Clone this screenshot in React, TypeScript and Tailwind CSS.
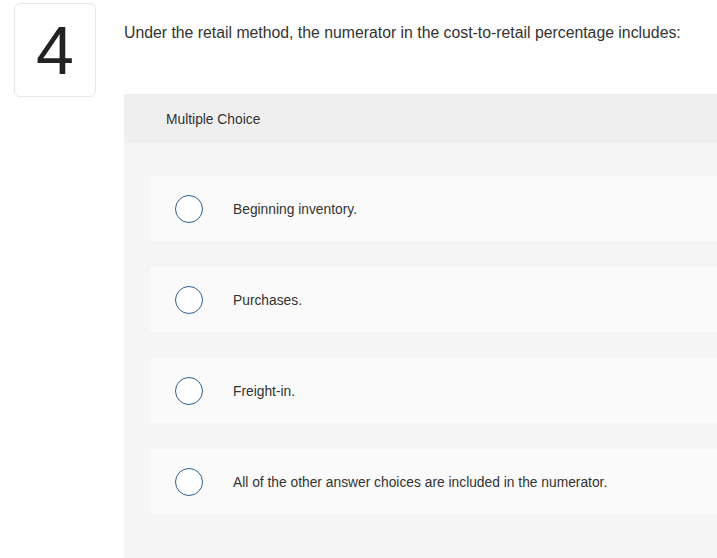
const options = [
  'Beginning inventory.',
  'Purchases.',
  'Freight-in.',
  'All of the other answer choices are included in the numerator.',
];

export default function App() {
  return (
    <div className="flex h-[558px] w-[717px] overflow-hidden bg-white text-[#333] [font-family:'Liberation_Sans',Arial,sans-serif]">
      <div className="w-[124px] shrink-0 pl-[14px] pt-[3px]">
        <div className="flex h-[94px] w-[82px] items-center justify-center rounded-[6px] border border-[#e8e8e8]">
          <span className="text-[68px] leading-none text-[#222]">4</span>
        </div>
      </div>
      <div className="flex min-w-0 flex-1 flex-col">
        <p className="mt-[24px] h-[70px] text-[15.8px] leading-[18px] whitespace-nowrap">
          Under the retail method, the numerator in the cost-to-retail percentage includes:
        </p>
        <div className="flex flex-1 flex-col bg-[#f5f5f5]">
          <div className="flex h-[49px] items-center bg-[#efefef] pl-[42px] pt-[3px] text-[13.8px]">Multiple Choice</div>
          <div className="flex flex-col gap-[26px] pl-[26px] pt-[33px]">
            {options.map(o => (
              <div key={o} className="flex h-[65px] items-center rounded-l-[4px] bg-[#fafafa] pl-[25px]">
                <span className="h-[28px] w-[28px] shrink-0 rounded-full border-[1.5px] border-[#2f5f8e] bg-white" />
                <span className="ml-[30px] mt-[3px] text-[13.8px]">{o}</span>
              </div>
            ))}
          </div>
        </div>
      </div>
    </div>
  );
}
